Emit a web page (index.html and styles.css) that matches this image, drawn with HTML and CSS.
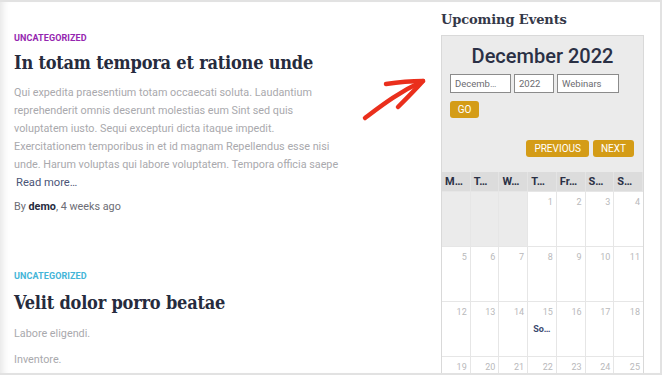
FILE: index.html
```html
<!DOCTYPE html>
<html lang="en">
<head>
    <meta charset="UTF-8" />
    <title>Blog with events</title>
    <link rel="stylesheet" href="styles.css">
</head>
<body>
<div class="frame">

    <div class="posts">
        <article class="post">
            <div class="cat cat-purple">Uncategorized</div>
            <h2 class="post-title">In totam tempora et ratione unde</h2>
            <p class="excerpt">Qui expedita praesentium totam occaecati soluta. Laudantium reprehenderit omnis deserunt molestias eum Sint sed quis voluptatem iusto. Sequi excepturi dicta itaque impedit. Exercitationem temporibus in et id magnam Repellendus esse nisi unde. Harum voluptas qui labore voluptatem. Tempora officia saepe <a class="more" href="#">Read more…</a></p>
            <div class="meta">By <b>demo</b>, 4 weeks ago</div>
        </article>

        <article class="post post-second">
            <div class="cat cat-blue">Uncategorized</div>
            <h2 class="post-title">Velit dolor porro beatae</h2>
            <p class="excerpt short">Labore eligendi.</p>
            <p class="excerpt short">Inventore.</p>
        </article>
    </div>

    <aside class="sidebar">
        <h3 class="widget-title">Upcoming Events</h3>
        <div class="calendar">
            <div class="cal-head">
                <div class="cal-month">December 2022</div>
                <div class="cal-selects">
                    <span class="sel sel-month">Decemb…</span>
                    <span class="sel sel-year">2022</span>
                    <span class="sel sel-cat">Webinars</span>
                </div>
                <button class="btn btn-go">GO</button>
                <div class="cal-nav">
                    <button class="btn">PREVIOUS</button>
                    <button class="btn">NEXT</button>
                </div>
            </div>
            <div class="cal-grid">
                <div class="dow">M…</div>
                <div class="dow">T…</div>
                <div class="dow">W…</div>
                <div class="dow">T…</div>
                <div class="dow">Fr…</div>
                <div class="dow">S…</div>
                <div class="dow">S…</div>

                <div class="day empty"></div>
                <div class="day empty"></div>
                <div class="day empty"></div>
                <div class="day">1</div>
                <div class="day">2</div>
                <div class="day">3</div>
                <div class="day">4</div>

                <div class="day">5</div>
                <div class="day">6</div>
                <div class="day">7</div>
                <div class="day">8</div>
                <div class="day">9</div>
                <div class="day">10</div>
                <div class="day">11</div>

                <div class="day">12</div>
                <div class="day">13</div>
                <div class="day">14</div>
                <div class="day">15<span class="event">So…</span></div>
                <div class="day">16</div>
                <div class="day">17</div>
                <div class="day">18</div>

                <div class="day">19</div>
                <div class="day">20</div>
                <div class="day">21</div>
                <div class="day">22</div>
                <div class="day">23</div>
                <div class="day">24</div>
                <div class="day">25</div>
            </div>
        </div>
    </aside>

    <!-- красная стрелка поверх страницы -->
    <svg class="arrow" width="90" height="50" viewBox="0 0 90 50">
        <path d="M4 42 C 20 30, 38 16, 62 5" fill="none" stroke="#ea2f1c" stroke-width="4.5" stroke-linecap="round"/>
        <path d="M25 8 C 38 6, 50 5, 62 5 C 54 14, 46 22, 37 31" fill="none" stroke="#ea2f1c" stroke-width="4.5" stroke-linecap="round" stroke-linejoin="round"/>
    </svg>
</div>
</body>
</html>
```

FILE: styles.css
```css
body {
    margin: 0;
    font-family: 'Roboto', sans-serif;
    background: #fff;
}

.frame {
    position: relative;
    display: flex;
    height: 375px;
    box-sizing: border-box;
    border-top: 2px solid #e2e2e2;
    border-right: 2px solid #e2e2e2;
    border-bottom: 2px solid #e2e2e2;
    box-shadow: inset 9px 0 8px -7px rgba(0, 0, 0, 0.12);
    overflow: hidden;
}

/* левая колонка с постами */
.posts {
    width: 326px;
    padding: 31px 0 0 14px;
    flex-shrink: 0;
}

.cat {
    font-size: 9px;
    font-weight: 700;
    text-transform: uppercase;
    letter-spacing: 0.1px;
}

.cat-purple {
    color: #9526b0;
}

.cat-blue {
    color: #44b5d8;
}

.post-title {
    margin: 9px 0 11px;
    font-family: 'DejaVu Serif Condensed', 'DejaVu Serif', serif;
    font-stretch: condensed;
    font-size: 18px;
    font-weight: 700;
    color: #262b3d;
    letter-spacing: -0.2px;
    white-space: nowrap;
}

.excerpt {
    margin: 0;
    font-size: 10.8px;
    line-height: 18px;
    color: #a9a9ad;
}

.more {
    color: #4b5577;
    text-decoration: none;
    margin-left: 2px;
    font-size: 11.2px;
}

.meta {
    margin-top: 8px;
    font-size: 10.8px;
    color: #6c6d75;
}

.meta b {
    color: #262b3d;
}

.post-second {
    margin-top: 58px;
}

.post-second .post-title {
    margin-top: 11px;
    margin-bottom: 12px;
}

.excerpt.short {
    margin-bottom: 8px;
}

/* правая колонка */
.sidebar {
    margin-left: 101px;
    width: 203px;
    padding-top: 10px;
}

.widget-title {
    margin: 0 0 8px;
    font-family: 'DejaVu Serif', serif;
    font-size: 13px;
    font-weight: 700;
    color: #343848;
    letter-spacing: -0.1px;
}

.calendar {
    border: 1px solid #d9d9d9;
    background: #ebebeb;
}

.cal-head {
    padding: 6px 8px 15px;
}

.cal-month {
    text-align: center;
    font-size: 20px;
    font-weight: 500;
    color: #2a3045;
    line-height: 28px;
}

.cal-selects {
    display: flex;
    gap: 3px;
    margin-top: 4px;
}

.sel {
    display: block;
    height: 19px;
    box-sizing: border-box;
    border: 1px solid #8b8b8b;
    background: #fff;
    font-size: 9.5px;
    line-height: 17px;
    padding-left: 4px;
    color: #6b6b70;
}

.sel-month {
    width: 61px;
}

.sel-year {
    width: 40px;
}

.sel-cat {
    width: 62px;
}

.btn {
    font-family: 'Roboto', sans-serif;
    background: #d49c17;
    color: #fff;
    border: none;
    border-radius: 3px;
    font-size: 10px;
    height: 17px;
    padding: 0 8px;
}

.btn-go {
    margin-top: 8px;
    width: 29px;
    padding: 0;
}

.cal-nav {
    display: flex;
    justify-content: flex-end;
    gap: 4px;
    margin-top: 22px;
    margin-right: 1px;
}

.cal-grid {
    display: grid;
    grid-template-columns: repeat(7, 1fr);
    grid-auto-rows: 55px;
    grid-template-rows: 19px;
    background: #fff;
}

.dow {
    background: #dcdcdc;
    font-size: 11px;
    font-weight: 700;
    color: #2a3045;
    line-height: 19px;
    padding-left: 3px;
    border-right: 1px solid #e4e4e4;
}

.day {
    border-right: 1px solid #e6e6e6;
    border-top: 1px solid #e6e6e6;
    text-align: right;
    font-size: 9px;
    color: #b9b9bb;
    padding: 5px 3px 0 0;
}

.day:nth-child(7n) {
    border-right: none;
}

.day.empty {
    background: #ebebeb;
}

.event {
    display: block;
    text-align: left;
    margin: 7px 0 0 5px;
    font-size: 9px;
    font-weight: 700;
    color: #3b4a6e;
}

.arrow {
    position: absolute;
    left: 361px;
    top: 74px;
}
```
